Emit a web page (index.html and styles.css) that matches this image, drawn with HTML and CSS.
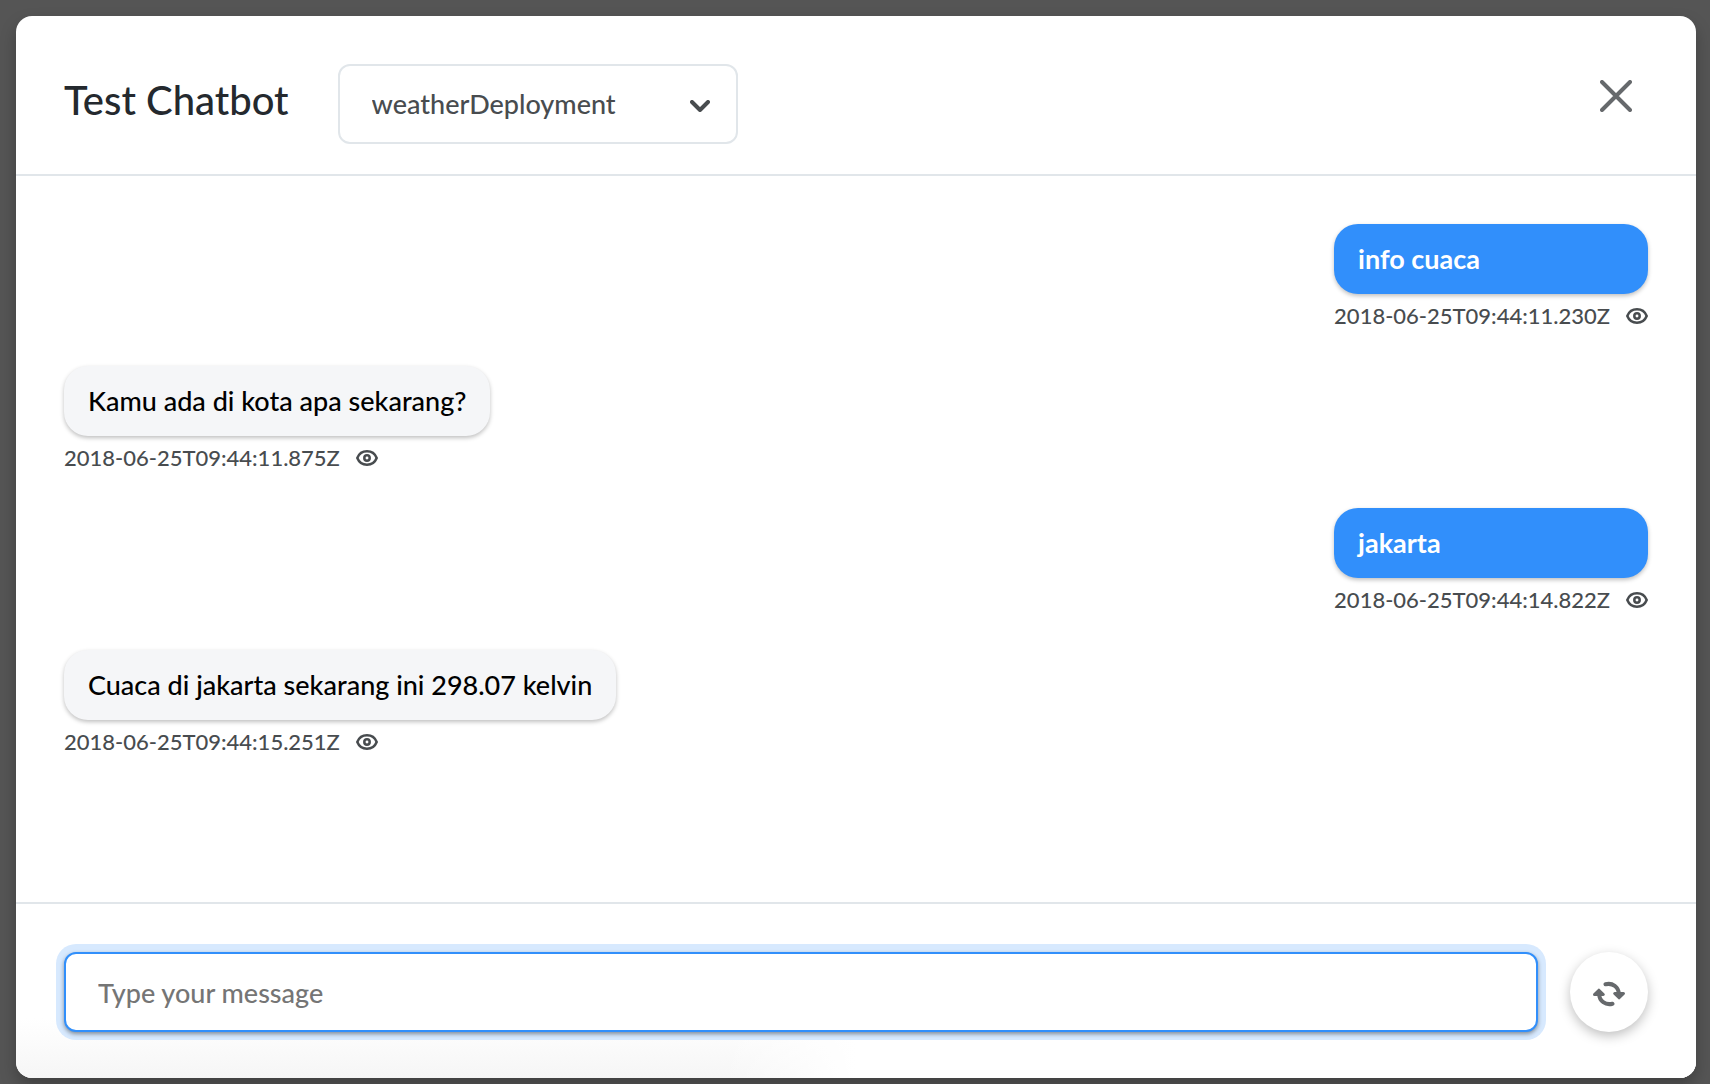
FILE: index.html
```html
<!DOCTYPE html>
<html lang="id">
<head>
<meta charset="utf-8">
<meta name="viewport" content="width=device-width, initial-scale=1">
<title>Test Chatbot</title>
<link rel="stylesheet" href="styles.css">
</head>
<body>
<svg class="sprite" aria-hidden="true">
  <symbol id="eye" viewBox="0 0 22 16">
    <path d="M1.300 8C3 3.700 6.500 1.300 11 1.300S19 3.700 20.700 8C19 12.300 15.500 14.700 11 14.700S3 12.300 1.300 8Z"/>
    <circle cx="11" cy="8" r="2.700"/>
  </symbol>
</svg>
<main class="dialog" role="dialog" aria-labelledby="title">
  <header class="dialog-header">
    <h1 class="title" id="title">Test Chatbot</h1>
    <div class="picker">
      <select class="picker-select" aria-label="Deployment">
        <option>weatherDeployment</option>
      </select>
      <svg class="picker-arrow" viewBox="0 0 20 12" aria-hidden="true"><path d="M2 2l8 8 8-8"/></svg>
    </div>
    <button class="close" type="button" aria-label="Close">
      <svg class="close-icon" viewBox="0 0 32 32" aria-hidden="true"><path d="M2 2l28 28M30 2L2 30"/></svg>
    </button>
  </header>
  <section class="messages" aria-label="Messages">
    <article class="message message-user">
      <p class="bubble">info cuaca</p>
      <div class="meta"><time>2018-06-25T09:44:11.230Z</time><button class="view" type="button" aria-label="View details"><svg class="eye"><use href="#eye"/></svg></button></div>
    </article>
    <article class="message">
      <p class="bubble">Kamu ada di kota apa sekarang?</p>
      <div class="meta"><time>2018-06-25T09:44:11.875Z</time><button class="view" type="button" aria-label="View details"><svg class="eye"><use href="#eye"/></svg></button></div>
    </article>
    <article class="message message-user">
      <p class="bubble">jakarta</p>
      <div class="meta"><time>2018-06-25T09:44:14.822Z</time><button class="view" type="button" aria-label="View details"><svg class="eye"><use href="#eye"/></svg></button></div>
    </article>
    <article class="message">
      <p class="bubble">Cuaca di jakarta sekarang ini 298.07 kelvin</p>
      <div class="meta"><time>2018-06-25T09:44:15.251Z</time><button class="view" type="button" aria-label="View details"><svg class="eye"><use href="#eye"/></svg></button></div>
    </article>
  </section>
  <form class="composer">
    <input class="composer-input" type="text" placeholder="Type your message" aria-label="Type your message">
    <button class="refresh" type="button" aria-label="Restart conversation">
      <svg class="refresh-icon" viewBox="0 0 32 26" aria-hidden="true">
        <path class="arc" d="M12.500 3.300C19.500 1.500 25.800 6 25.800 13M19.500 22.700C12.500 24.500 6.200 20 6.200 13"/>
        <path class="head" d="M21.700 12.500h8.800L26.100 16.800ZM10.300 13.500H1.500L5.900 9.200Z"/>
      </svg>
    </button>
  </form>
</main>
</body>
</html>
```
FILE: styles.css
```css
* {
  box-sizing: border-box;
}

body {
  margin: 0;
  min-height: 100vh;
  padding: 16px 14px 6px 16px;
  display: flex;
  background: #555;
  color: #484c4f;
  font-family: Lato, "Noto Sans", sans-serif;
  font-size: 27px;
  font-weight: 500;
  line-height: 32px;
}

button {
  padding: 0;
  border: 0;
  background: none;
  color: inherit;
  cursor: pointer;
}

svg {
  display: block;
  fill: none;
  stroke: currentColor;
  stroke-linecap: round;
  stroke-linejoin: round;
}

.sprite {
  position: absolute;
  width: 0;
  height: 0;
}

.dialog {
  flex: 1;
  display: flex;
  flex-direction: column;
  border-radius: 16px;
  background: #fff;
  box-shadow: 0 8px 16px rgba(0, 0, 0, 0.25);
}

.dialog-header {
  display: flex;
  align-items: flex-start;
  padding: 48px 64px 30px 48px;
  border-bottom: 2px solid #e1e6ea;
}

.title {
  margin: 12px 49px 0 0;
  color: #24292e;
  font-size: 40px;
  font-weight: 500;
  line-height: 48px;
}

.picker {
  display: grid;
  align-items: center;
  width: 400px;
}

.picker-select,
.picker-arrow {
  grid-area: 1 / 1;
}

.picker-select {
  appearance: none;
  width: 100%;
  height: 80px;
  padding: 0 64px 0 32px;
  border: 2px solid #e1e6ea;
  border-radius: 12px;
  background: #fff;
  color: inherit;
  font: inherit;
}

.picker-arrow {
  justify-self: end;
  width: 20px;
  height: 12px;
  margin: 4px 28px 0 0;
  stroke-width: 4;
  pointer-events: none;
}

.close {
  margin: 16px 0 0 auto;
  color: #66696c;
}

.close-icon {
  width: 32px;
  height: 32px;
  stroke-width: 4;
}

.messages {
  flex: 1;
  display: flex;
  flex-direction: column;
  align-items: flex-start;
  gap: 34px;
  padding: 48px;
}

.message-user {
  align-self: flex-end;
}

.bubble {
  margin: 0;
  padding: 19px 24px;
  border-radius: 24px;
  background: #f5f6f8;
  box-shadow: 0 2px 4px rgba(0, 0, 0, 0.25);
  color: #000;
}

.message-user .bubble {
  background: #318ffb;
  color: #fff;
  font-weight: 700;
}

.meta {
  display: flex;
  align-items: center;
  gap: 16px;
  margin-top: 6px;
  font-size: 22px;
  line-height: 32px;
}

.eye {
  width: 22px;
  height: 16px;
  stroke-width: 2.5;
}

.composer {
  display: flex;
  gap: 32px;
  padding: 48px 48px 46px;
  border-top: 2px solid #e1e6ea;
  border-radius: 0 0 16px 16px;
  background:
    linear-gradient(to right, transparent 42%, #fff 50%),
    linear-gradient(to top, #f6f6f6, #fff 60px);
}

.composer-input {
  flex: 1;
  min-width: 0;
  height: 80px;
  padding: 0 32px;
  border: 2px solid #318ffb;
  border-radius: 12px;
  outline: 0;
  background: #fff;
  box-shadow: 0 2px 4px rgba(0, 0, 0, 0.4), 0 0 0 8px #d7e9fe;
  color: inherit;
  font: inherit;
}

.composer-input::placeholder {
  color: #757575;
  opacity: 1;
}

.refresh {
  display: grid;
  place-items: center;
  width: 78px;
  height: 80px;
  border-radius: 50%;
  background: #fff;
  box-shadow: 0 4px 12px rgba(0, 0, 0, 0.25);
  color: #66696c;
}

.refresh-icon {
  width: 32px;
  height: 26px;
  margin-top: 4px;
}

.arc {
  stroke-width: 4;
}

.head {
  fill: currentColor;
  stroke-width: 3;
}
```
